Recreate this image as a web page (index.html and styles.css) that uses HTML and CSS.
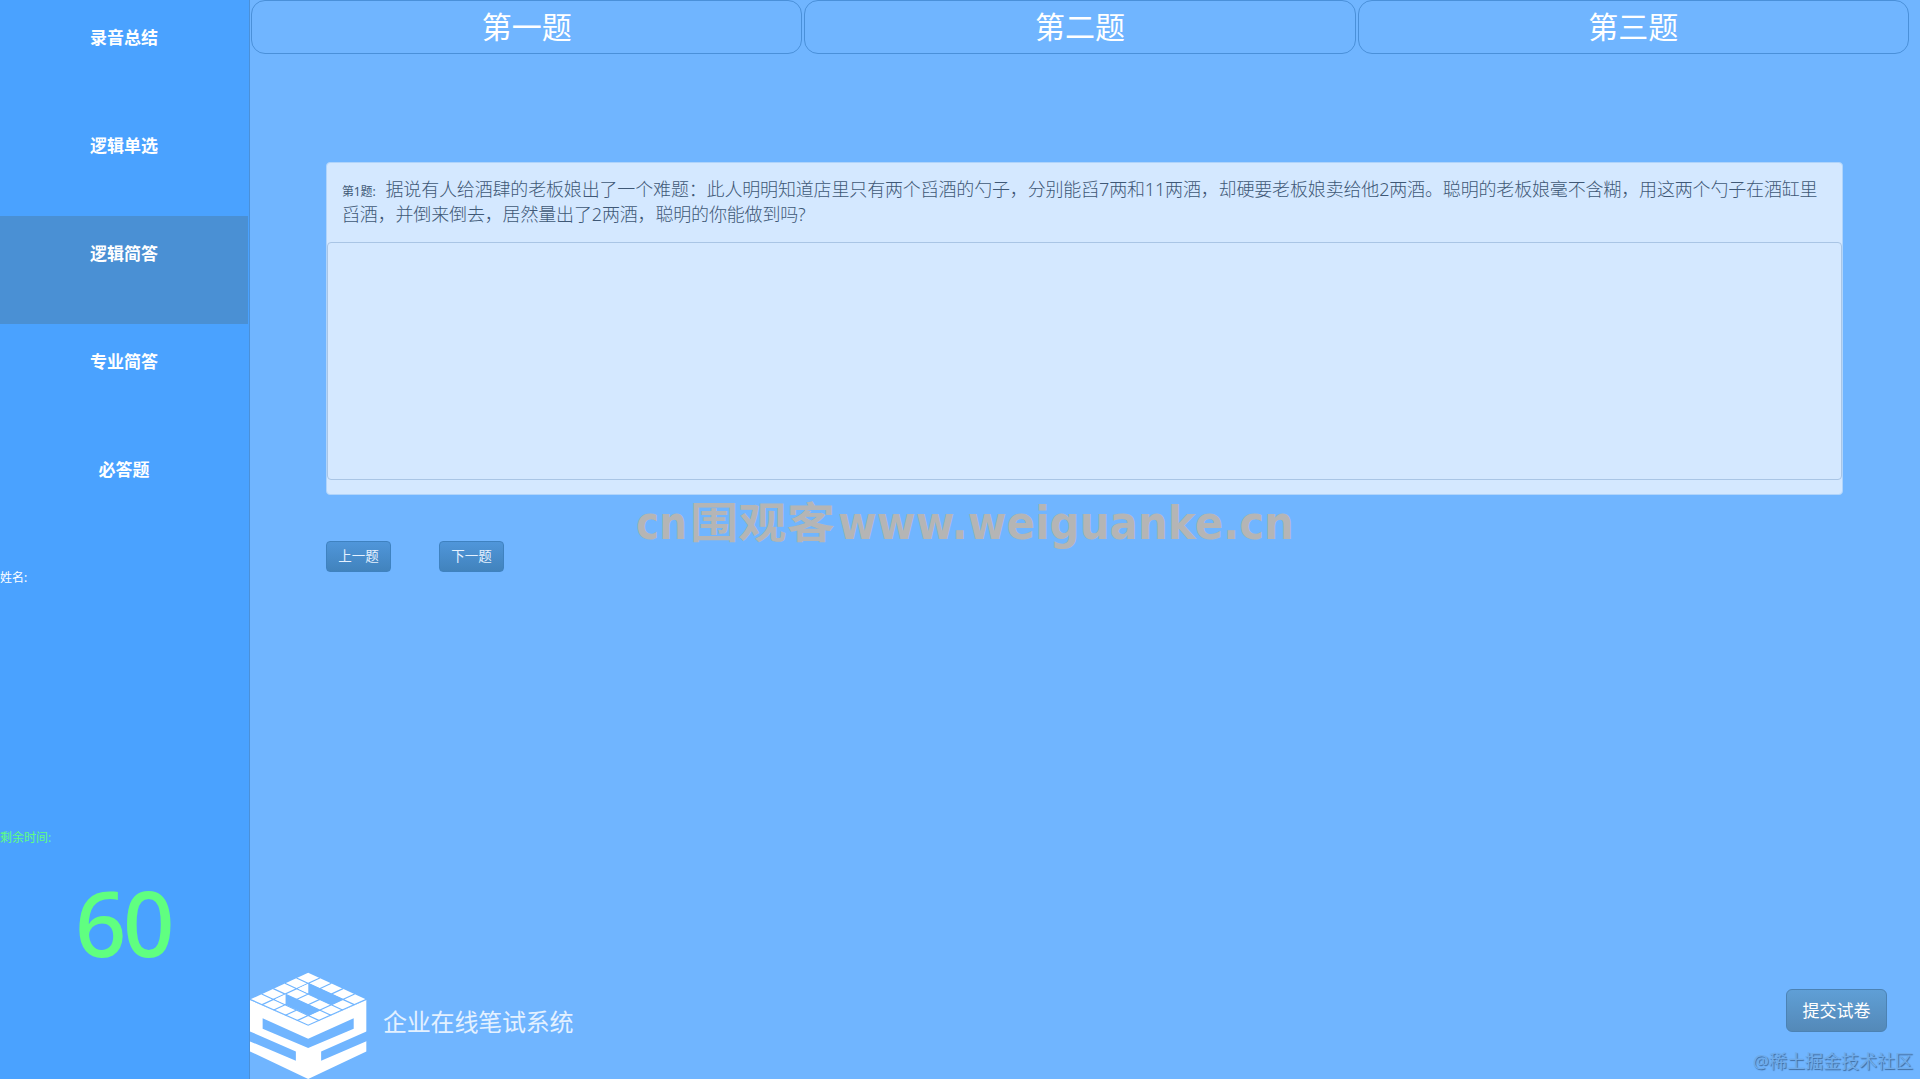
FILE: index.html
```html
<!DOCTYPE html>
<html lang="zh-CN">
<head>
  <meta charset="UTF-8">
  <meta name="viewport" content="width=device-width, initial-scale=1.0">
  <title>企业在线笔试系统</title>
  <link rel="stylesheet" href="styles.css">
</head>
<body>
  <aside class="sidebar">
    <nav>
      <a href="#record">录音总结</a>
      <a href="#choice">逻辑单选</a>
      <a href="#logic" class="active">逻辑简答</a>
      <a href="#major">专业简答</a>
      <a href="#required">必答题</a>
    </nav>
    <div class="name">姓名:</div>
    <div class="time-label">剩余时间:</div>
    <div class="time">60</div>
  </aside>

  <main>
    <div class="tabs">
      <a href="#q1">第一题</a>
      <a href="#q2">第二题</a>
      <a href="#q3">第三题</a>
    </div>

    <section class="question">
      <p><small>第1题:</small>据说有人给酒肆的老板娘出了一个难题：此人明明知道店里只有两个舀酒的勺子，分别能舀7两和11两酒，却硬要老板娘卖给他2两酒。聪明的老板娘毫不含糊，用这两个勺子在酒缸里<br>舀酒，并倒来倒去，居然量出了2两酒，聪明的你能做到吗?</p>
      <textarea></textarea>
    </section>

    <div class="pager">
      <button type="button" class="btn">上一题</button>
      <button type="button" class="btn">下一题</button>
    </div>

    <footer>
      <svg class="logo" viewBox="60 95 352 322">
        <!-- top tiles -->
        <path class="face" d="M235 97L410 178L235 259L60 178Z"/>
        <path class="line" d="M200 113L375 194M165 129L340 210M130 145L305 226M95 161L270 242M270 113L95 194M305 129L130 210M340 145L165 226M375 161L200 242"/>
        <path class="hole" d="M235 128L341 177L305 194L235 161ZM165 161L272 210L237 226L165 193Z"/>
        <path class="face" d="M235 130V159L204 145ZM167 162V191L135 177Z"/>
        <!-- front faces -->
        <path class="face" d="M60 179L235 257L410 179V334L235 417L60 334Z"/>
        <path class="line" d="M60 177L235 255L410 177"/>
        <path class="hole" d="M98 234L235 296L372 234V266L235 324L98 266ZM58 273L198 334V362L58 303ZM412 273L274 334V362L412 303Z"/>
      </svg>
      <h1>企业在线笔试系统</h1>
      <button type="button" class="btn submit">提交试卷</button>
    </footer>
  </main>

  <svg class="watermark" width="680" height="70">
    <text x="10" y="46" textLength="51" lengthAdjust="spacingAndGlyphs">cn</text>
    <text class="zh" x="64" y="45" textLength="145" lengthAdjust="spacingAndGlyphs">围观客</text>
    <text x="212" y="46" textLength="456" lengthAdjust="spacingAndGlyphs">www.weiguanke.cn</text>
  </svg>
  <div class="community">@稀土掘金技术社区</div>
</body>
</html>
```

FILE: styles.css
```css
* {
  box-sizing: border-box;
}

body {
  display: flex;
  height: 1079px;
  margin: 0;
  overflow: hidden;
  background-color: #70b5ff;
  color: white;
  font-family: "Noto Sans", "Noto Sans CJK SC", sans-serif;
}

a {
  color: white;
  text-decoration: none;
}

.sidebar {
  display: flex;
  flex: none;
  flex-direction: column;
  width: 250px;
  padding-right: 1px;
  border-right: 1px solid #4a90d9;
  background-color: #4aa2ff;
}

.sidebar nav a {
  display: block;
  height: 108px;
  padding-top: 25px;
  font-size: 17px;
  font-weight: bold;
  line-height: 25px;
  text-align: center;
}

.sidebar nav .active {
  background-color: #4a90d4;
}

.name,
.time-label {
  height: 20px;
  margin-top: 28px;
  font-size: 12px;
  line-height: 20px;
}

.time-label {
  margin-top: 240px;
  color: #60ff80;
}

.time {
  margin-top: 14px;
  padding-right: 2px;
  color: #60ff80;
  font-size: 90px;
  font-weight: 500;
  letter-spacing: -3.5px;
  line-height: 120px;
  text-align: center;
}

main {
  flex: 1;
  display: flex;
  flex-direction: column;
  min-width: 0;
}

.tabs {
  display: grid;
  grid-template-columns: repeat(3, 1fr);
  gap: 2px;
  padding: 0 11px 0 1px;
}

.tabs a {
  height: 54px;
  border: 1px solid #4a90d9;
  border-radius: 14px;
  font-size: 30px;
  line-height: 52px;
  text-align: center;
}

.question {
  height: 333px;
  margin: 108px 77px 0 76px;
  border: 1px solid #b0d4fb;
  border-radius: 4px;
  background-color: #d4e8ff;
  color: #3f5876;
}

.question p {
  height: 79px;
  margin: 0;
  padding: 14px 15px;
  font-size: 18px;
  font-weight: 300;
  letter-spacing: -0.16px;
  line-height: 25px;
  white-space: nowrap;
}

.question small {
  margin-right: 10px;
  font-size: 12px;
  font-weight: 400;
  line-height: 1;
}

.question textarea {
  display: block;
  width: 100%;
  height: 238px;
  border: 1px solid #a9c5e5;
  border-radius: 4px;
  background: transparent;
  resize: none;
}

.pager {
  display: flex;
  gap: 48px;
  margin: 46px 0 0 76px;
}

.btn {
  width: 65px;
  height: 31px;
  padding: 0 0 3px;
  border: 1px solid #3f82c0;
  border-radius: 4px;
  background: linear-gradient(#5096da, #4183bd);
  color: #e4f1ff;
  font-family: inherit;
  font-size: 13.5px;
}

footer {
  display: flex;
  align-items: flex-end;
  margin-top: auto;
}

.logo {
  width: 117px;
  height: 107px;
}

.face {
  fill: white;
}

.hole {
  fill: #70b5ff;
}

.line {
  fill: none;
  stroke: #70b5ff;
  stroke-width: 3.5;
}

footer h1 {
  margin: 0 auto 37px 16px;
  color: #e4f1ff;
  font-size: 24px;
  font-weight: normal;
  letter-spacing: -0.2px;
  line-height: 40px;
}

.submit {
  width: 101px;
  height: 43px;
  margin: 0 33px 47px 0;
  border-color: #4c82b3;
  border-radius: 6px;
  background: linear-gradient(#5f9fd6, #5489b8);
  color: white;
  font-size: 17px;
}

.watermark {
  position: absolute;
  top: 493px;
  left: 626px;
  overflow: visible;
  fill: #b5b5b5;
  font-family: "DejaVu Sans", sans-serif;
  font-size: 46px;
  font-weight: bold;
}

.watermark .zh {
  font-family: "Noto Sans CJK SC", sans-serif;
  font-size: 42px;
}

.community {
  position: absolute;
  right: 7px;
  bottom: 5px;
  color: #6fabe9;
  font-size: 18px;
  line-height: 26px;
  text-shadow: 1px 1px 1px #3f6c9f;
}
```
